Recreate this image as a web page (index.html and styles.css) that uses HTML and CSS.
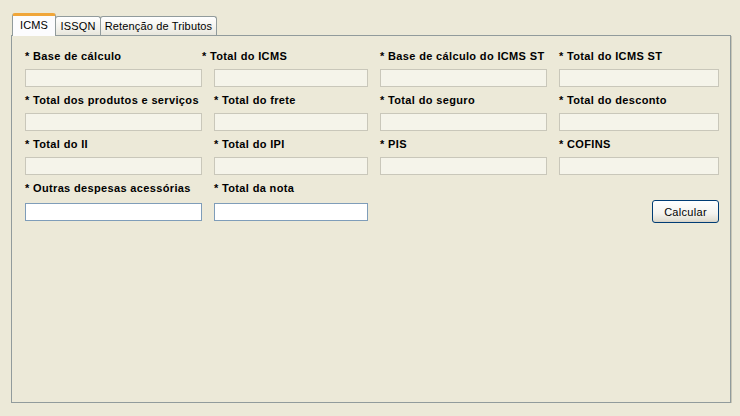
FILE: index.html
```html
<!DOCTYPE html>
<html>
<head>
<meta charset="utf-8">
<link rel="stylesheet" href="styles.css">
</head>
<body>
<div class="wrap">
  <div class="tabs">
    <div class="tab tab-active tab-icms">ICMS</div>
    <div class="tab tab-issqn">ISSQN</div>
    <div class="tab tab-ret">Retenção de Tributos</div>
  </div>
  <div class="panel">
    <div class="grid">
      <div class="field"><label>* Base de cálculo</label><input class="inp" disabled></div>
      <div class="field"><label class="shift">* Total do ICMS</label><input class="inp" disabled></div>
      <div class="field"><label>* Base de cálculo do ICMS ST</label><input class="inp" disabled></div>
      <div class="field"><label>* Total do ICMS ST</label><input class="inp" disabled></div>

      <div class="field"><label>* Total dos produtos e serviços</label><input class="inp" disabled></div>
      <div class="field"><label>* Total do frete</label><input class="inp" disabled></div>
      <div class="field"><label>* Total do seguro</label><input class="inp" disabled></div>
      <div class="field"><label>* Total do desconto</label><input class="inp" disabled></div>

      <div class="field"><label>* Total do II</label><input class="inp" disabled></div>
      <div class="field"><label>* Total do IPI</label><input class="inp" disabled></div>
      <div class="field"><label>* PIS</label><input class="inp" disabled></div>
      <div class="field"><label>* COFINS</label><input class="inp" disabled></div>

      <div class="field field-last"><label>* Outras despesas acessórias</label><input class="inp inp-on"></div>
      <div class="field field-last"><label>* Total da nota</label><input class="inp inp-on"></div>
      <div class="field"></div>
      <div class="btn-cell"><button class="btn">Calcular</button></div>
    </div>
  </div>
</div>
</body>
</html>
```

FILE: styles.css
```css
* { box-sizing: border-box; }
html, body {
  margin: 0;
  background: #ece9d8;
  font-family: "Liberation Sans", Arial, sans-serif;
  font-size: 11px;
  color: #000;
}
.wrap {
  padding: 13px 0 0 11px;
  width: 731px;
}
.tabs {
  display: flex;
  align-items: flex-end;
  height: 22px;
  padding-left: 1px;
}
.tab {
  position: relative;
  height: 19px;
  border: 1px solid #919b9c;
  border-bottom: none;
  border-radius: 3px 3px 0 0;
  background: linear-gradient(#ffffff, #f3f2ec 60%, #e8e6dc);
  display: flex;
  align-items: center;
  justify-content: center;
  line-height: 13px;
  letter-spacing: 0.15px;
}
.tab-issqn { width: 46px; margin-left: -1px; }
.tab-ret { width: 117px; margin-left: -1px; }
.tab-active {
  z-index: 2;
  width: 44px;
  height: 23px;
  margin-bottom: -1px;
  border-top: 3px solid #f0a63a;
  border-color: #f0a63a #919b9c #919b9c #919b9c;
  background: #fcfcfe;
  padding-bottom: 2px;
}
.panel {
  position: relative;
  z-index: 1;
  width: 720px;
  height: 368px;
  border: 1px solid #919b9c;
  box-shadow: 1px 1px 0 #c9c6b6;
  background: #ece9d8;
  padding: 14px 0 0 13px;
}
.grid {
  display: grid;
  grid-template-columns: 177px 154px 167px 160px;
  column-gap: 12px;
  row-gap: 7px;
}
.field {
  display: flex;
  flex-direction: column;
}
.field label {
  font-weight: bold;
  height: 13px;
  line-height: 13px;
  margin-bottom: 6px;
  white-space: nowrap;
  letter-spacing: 0.35px;
}
.field label.shift { margin-left: -12px; }
.inp {
  display: block;
  width: 100%;
  height: 18px;
  margin: 0;
  padding: 0 3px;
  border: 1px solid #c9c7ba;
  background: #f5f4ea;
  font: inherit;
  outline: none;
}
.inp-on {
  border-color: #7f9db9;
  background: #ffffff;
}
.field-last label { margin-bottom: 8px; }
.field-last .inp { margin-bottom: 2px; }
.btn-cell {
  display: flex;
  justify-content: flex-end;
  align-items: flex-end;
}
.btn {
  width: 67px;
  height: 23px;
  margin: 0;
  padding: 0;
  border: 1px solid #003c74;
  border-radius: 3px;
  background: linear-gradient(#ffffff, #f4f3ee 60%, #e3e1d6 90%, #d6d0c5);
  font: inherit;
  color: #000;
  letter-spacing: 0.3px;
}
```
